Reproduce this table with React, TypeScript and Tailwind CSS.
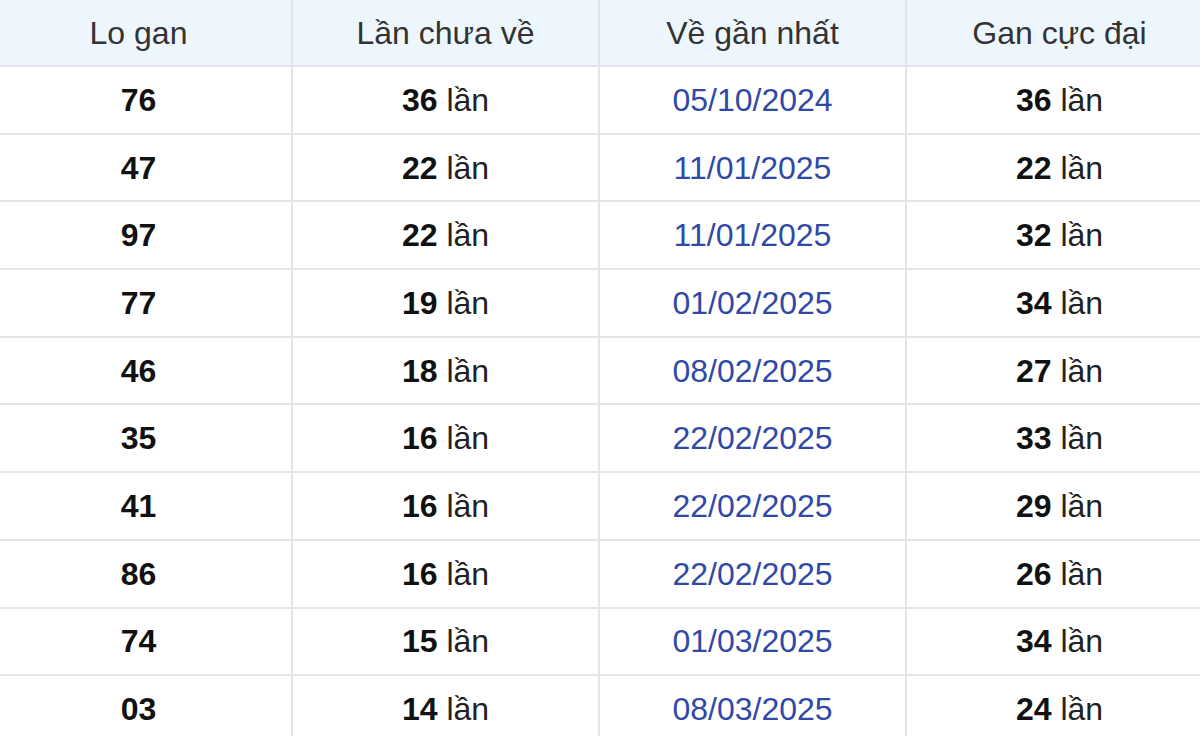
const rows = [
  { lo: '76', chua: 36, ve: '05/10/2024', cuc: 36 },
  { lo: '47', chua: 22, ve: '11/01/2025', cuc: 22 },
  { lo: '97', chua: 22, ve: '11/01/2025', cuc: 32 },
  { lo: '77', chua: 19, ve: '01/02/2025', cuc: 34 },
  { lo: '46', chua: 18, ve: '08/02/2025', cuc: 27 },
  { lo: '35', chua: 16, ve: '22/02/2025', cuc: 33 },
  { lo: '41', chua: 16, ve: '22/02/2025', cuc: 29 },
  { lo: '86', chua: 16, ve: '22/02/2025', cuc: 26 },
  { lo: '74', chua: 15, ve: '01/03/2025', cuc: 34 },
  { lo: '03', chua: 14, ve: '08/03/2025', cuc: 24 },
]

const headers = ['Lo gan', 'Lần chưa về', 'Về gần nhất', 'Gan cực đại']

export default function App() {
  return (
    <div className="w-[1200px] h-[736px] overflow-hidden bg-white font-['Liberation_Sans',Arial,sans-serif] text-[32px]">
      <table className="-ml-[16px] w-[1230px] table-fixed border-collapse">
        <thead>
          <tr className="h-[66px] bg-[#eef6fd]">
            {headers.map((h) => (
              <th
                key={h}
                className="border-2 border-t-0 border-[#e3e5ea] font-normal text-[#333] text-center align-middle"
              >
                {h}
              </th>
            ))}
          </tr>
        </thead>
        <tbody>
          {rows.map((r, i) => (
            <tr key={i} className="h-[67.7px]">
              <td className="border-2 border-[#e3e5ea] text-center font-bold text-[#111]">{r.lo}</td>
              <td className="border-2 border-[#e3e5ea] text-center text-[#222]">
                <b className="text-[#111]">{r.chua}</b> lần
              </td>
              <td className="border-2 border-[#e3e5ea] text-center text-[#3149a6]">{r.ve}</td>
              <td className="border-2 border-[#e3e5ea] text-center text-[#222]">
                <b className="text-[#111]">{r.cuc}</b> lần
              </td>
            </tr>
          ))}
        </tbody>
      </table>
    </div>
  )
}
